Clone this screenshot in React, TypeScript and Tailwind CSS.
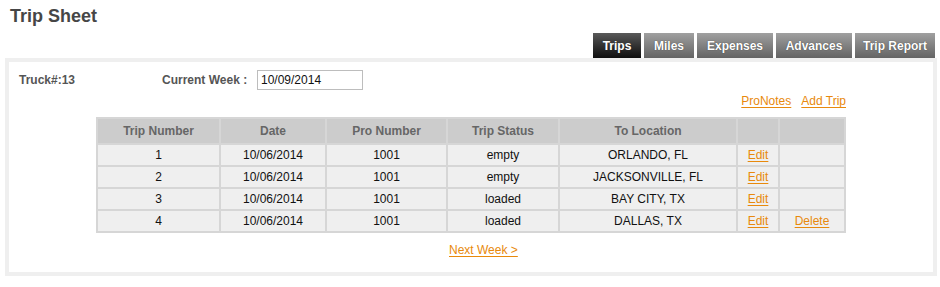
import React from "react";

const tabs = [
  { label: "Trips", w: "w-[48px]" },
  { label: "Miles", w: "w-[50px]" },
  { label: "Expenses", w: "w-[76px]" },
  { label: "Advances", w: "w-[76px]" },
  { label: "Trip Report", w: "w-[80px]" },
];

const trips = [
  { num: 1, date: "10/06/2014", pro: "1001", status: "empty", to: "ORLANDO, FL", del: false },
  { num: 2, date: "10/06/2014", pro: "1001", status: "empty", to: "JACKSONVILLE, FL", del: false },
  { num: 3, date: "10/06/2014", pro: "1001", status: "loaded", to: "BAY CITY, TX", del: false },
  { num: 4, date: "10/06/2014", pro: "1001", status: "loaded", to: "DALLAS, TX", del: true },
];

const link = "text-[#e8890c] underline underline-offset-[2px]";

export default function App() {
  return (
    <div
      className="w-[940px] h-[287px] bg-white pl-[5px] pr-[3px]"
      style={{ fontFamily: '"Liberation Sans", Arial, sans-serif' }}
    >
      <h1 className="pl-[5px] pt-[6px] h-[33px] text-[18px] leading-[20px] font-bold text-[#464646]">
        Trip Sheet
      </h1>

      <div className="flex justify-end gap-[3px] pr-[2px] h-[25px]">
        {tabs.map((t, i) => (
          <div
            key={t.label}
            className={
              t.w +
              " h-[25px] flex items-center justify-center whitespace-nowrap text-[12px] font-bold text-white [text-shadow:0_0_1px_#333] " +
              (i === 0
                ? "bg-gradient-to-b from-[#5a5a5a] to-[#101010]"
                : "bg-gradient-to-b from-[#a0a0a0] to-[#646464]")
            }
          >
            {t.label}
          </div>
        ))}
      </div>

      <div className="border-[4px] border-[#efefef] h-[218px] text-[12px] text-[#111]">
        <div className="flex items-center h-[25px] mt-[5px] pl-[10px]">
          <span className="w-[143px] font-bold text-[#555]">Truck#:13</span>
          <span className="w-[95px] font-bold text-[#555]">Current Week :</span>
          <input
            readOnly
            value="10/09/2014"
            className="w-[106px] h-[20px] border border-[#bdbdbd] px-[3px] text-[12px] text-[#111] outline-none"
          />
        </div>

        <div className="w-[750px] mx-auto">
          <div className="flex justify-end gap-[10px] h-[25px]">
            <a className={link}>ProNotes</a>
            <a className={link}>Add Trip</a>
          </div>

          <table className="w-[748px] border-collapse table-fixed text-center">
            <colgroup>
              <col className="w-[123px]" />
              <col className="w-[106px]" />
              <col className="w-[121px]" />
              <col className="w-[112px]" />
              <col className="w-[178px]" />
              <col className="w-[42px]" />
              <col className="w-[66px]" />
            </colgroup>
            <thead>
              <tr className="bg-[#cccccc] h-[26px]">
                {["Trip Number", "Date", "Pro Number", "Trip Status", "To Location", "", ""].map((h, i) => (
                  <th key={i} className="border-2 border-[#d6d6d6] font-bold text-[#666]">
                    {h}
                  </th>
                ))}
              </tr>
            </thead>
            <tbody>
              {trips.map((t) => (
                <tr key={t.num} className="bg-[#efefef] h-[22px]">
                  <td className="border-2 border-[#d6d6d6]">{t.num}</td>
                  <td className="border-2 border-[#d6d6d6]">{t.date}</td>
                  <td className="border-2 border-[#d6d6d6]">{t.pro}</td>
                  <td className="border-2 border-[#d6d6d6]">{t.status}</td>
                  <td className="border-2 border-[#d6d6d6]">{t.to}</td>
                  <td className="border-2 border-[#d6d6d6]">
                    <a className={link}>Edit</a>
                  </td>
                  <td className="border-2 border-[#d6d6d6]">
                    {t.del && <a className={link}>Delete</a>}
                  </td>
                </tr>
              ))}
            </tbody>
          </table>

          <div className="pt-[8px] pl-[353px]">
            <a className={link}>Next Week &gt;</a>
          </div>
        </div>
      </div>
    </div>
  );
}
